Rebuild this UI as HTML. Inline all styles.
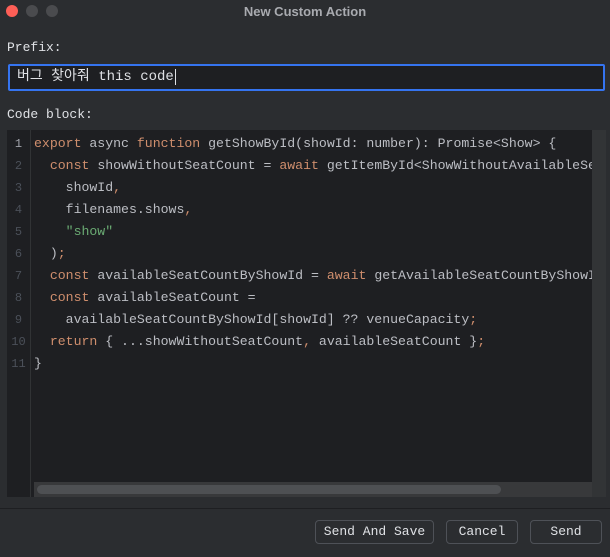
<!DOCTYPE html>
<html><head><style>
*{margin:0;padding:0;box-sizing:border-box}
body{width:610px;height:557px;background:#2b2d30;overflow:hidden;position:relative;font-family:"Liberation Mono","Noto Sans CJK KR",monospace;color:#dfe1e5}
.title{position:absolute;top:0;left:0;width:610px;height:24px;background:#2b2d30;text-align:center;font:bold 13px "Liberation Sans",sans-serif;color:#a9abb0;line-height:23px}
.dot{position:absolute;top:5px;width:12px;height:12px;border-radius:50%;background:#4a4b4e}
.lbl{position:absolute;left:7px;font-size:13px;color:#dfe1e5}
.input{position:absolute;left:8px;top:64px;width:597px;height:27px;border:2px solid #3574f0;background:#1e1f22;border-radius:2px;font-size:14px;padding-left:7px;line-height:22px;color:#dfe1e5}
.editor{position:absolute;left:7px;top:130px;width:599px;height:367px;background:#1e1f22}
.gutter{position:absolute;left:0;top:0;width:24px;height:367px;border-right:1px solid #313335;color:#4b5059;font-size:12px;text-align:center;padding-top:3px}
.gutter div{height:22px;line-height:22px}
.code{position:absolute;left:27px;top:3px;font-size:13.2px;line-height:22px;white-space:pre;color:#bcbec4;width:558px;overflow:hidden}
.k{color:#cf8e6d}.s{color:#6aab73}
.vs{position:absolute;left:585px;top:0;width:14px;height:367px;background:#323436}
.hs{position:absolute;left:27px;top:352px;width:558px;height:15px;background:#38393b}
.hs div{position:absolute;left:3px;top:3px;width:464px;height:9px;border-radius:5px;background:#4e5053}
.sep{position:absolute;left:0;top:508px;width:610px;height:1px;background:#1e1f22}
.btn{position:absolute;top:520px;height:24px;border:1px solid #4e5157;border-radius:4px;background:#2b2d30;font-size:13px;text-align:center;line-height:22px;color:#dfe1e5}
</style></head><body>
<div class="title">New Custom Action</div>
<div class="dot" style="left:6px;background:#fe5f57"></div>
<div class="dot" style="left:26px"></div>
<div class="dot" style="left:46px"></div>
<div class="lbl" style="top:40px">Prefix:</div>
<div class="input">버그 찾아줘 this code<span style="border-left:1px solid #dfe1e5;margin-left:1px"></span></div>
<div class="lbl" style="top:107px">Code block:</div>
<div class="editor">
<div class="gutter"><div style="color:#a1a3ab">1</div><div>2</div><div>3</div><div>4</div><div>5</div><div>6</div><div>7</div><div>8</div><div>9</div><div>10</div><div>11</div></div>
<div class="code"><span class="k">export</span> async <span class="k">function</span> getShowById(showId: number): Promise&lt;Show&gt; {
  <span class="k">const</span> showWithoutSeatCount = <span class="k">await</span> getItemById&lt;ShowWithoutAvailableSeatCount&gt;(
    showId<span class="k">,</span>
    filenames.shows<span class="k">,</span>
    <span class="s">"show"</span>
  )<span class="k">;</span>
  <span class="k">const</span> availableSeatCountByShowId = <span class="k">await</span> getAvailableSeatCountByShowId();
  <span class="k">const</span> availableSeatCount =
    availableSeatCountByShowId[showId] ?? venueCapacity<span class="k">;</span>
  <span class="k">return</span> { ...showWithoutSeatCount<span class="k">,</span> availableSeatCount }<span class="k">;</span>
}</div>
<div class="vs"></div>
<div class="hs"><div></div></div>
</div>
<div class="sep"></div>
<div class="btn" style="left:315px;width:119px">Send And Save</div>
<div class="btn" style="left:446px;width:72px">Cancel</div>
<div class="btn" style="left:530px;width:72px">Send</div>
</body></html>
